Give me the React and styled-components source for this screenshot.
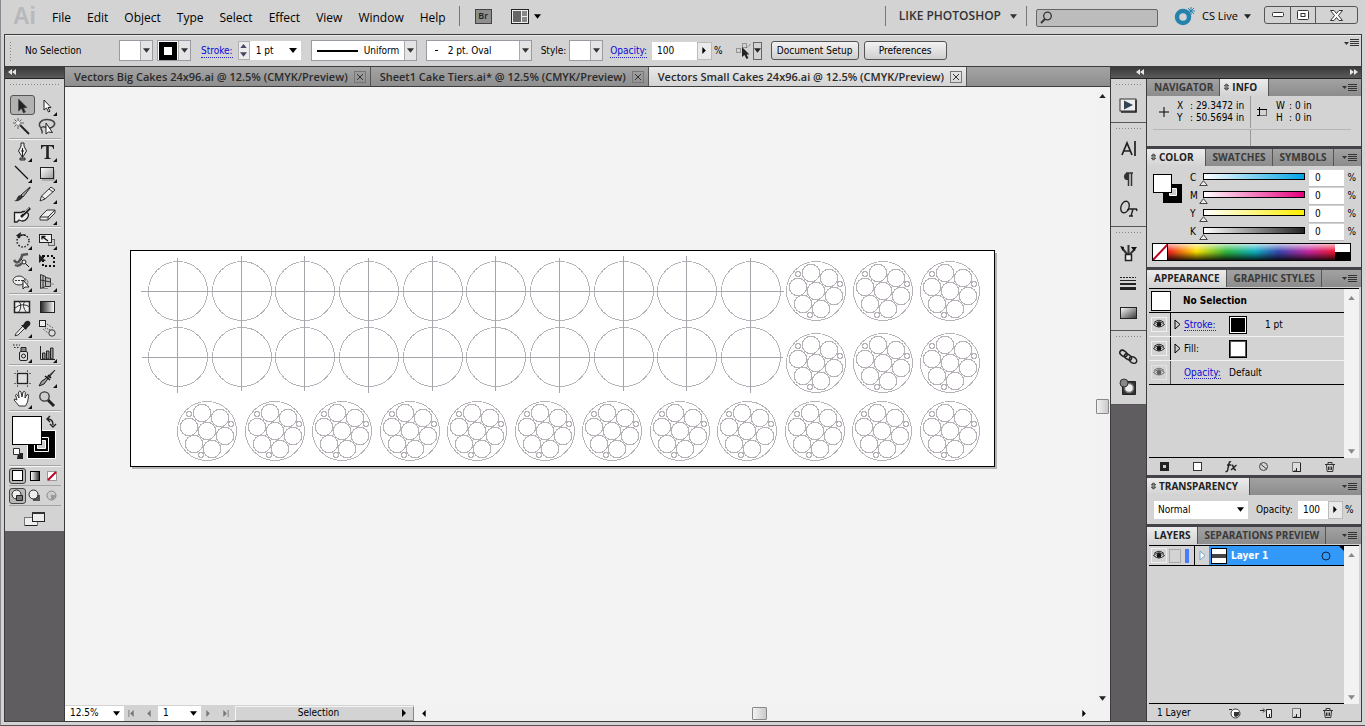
import React from 'react'
import styled, { createGlobalStyle, css } from 'styled-components'

const ui = '"DejaVu Sans Condensed", "DejaVu Sans", sans-serif'
const segoe = '"Open Sans", "Noto Sans", sans-serif'
const face = '#d3d3d3'
const dark = '#5f5d60'
const line = '#3c3c3c'
const thumb = "url(\"data:image/svg+xml,%3Csvg xmlns='http://www.w3.org/2000/svg' width='9' height='6'%3E%3Cpath d='M4.5 .7L8.3 5.5H.7z' fill='%23eee' stroke='%23444'/%3E%3C/svg%3E\")"

const GlobalStyle = createGlobalStyle`
  * {
    box-sizing: border-box;
  }

  body {
    margin: 0;
    background: ${face};
    color: #000;
    font-family: ${ui};
    font-size: 10px;
    line-height: 14px;
  }

  button, input, select {
    margin: 0;
    padding: 0;
    border: 0;
    border-radius: 0;
    background: none;
    color: inherit;
    font: inherit;
  }

  svg {
    display: block;
    flex: none;
  }
`

// Window frame
const Frame = styled.div`
  display: flex;
  flex-direction: column;
  min-height: 100vh;
  padding: 0 3px 3px;
  border-bottom: 1px solid #55525a;
  border-left: 1px solid #8c8890;
  background: ${face};
`

const Body = styled.div`
  display: flex;
  flex: 1;
  border: 1px solid ${line};
  border-top: 0;
`

// Menu bar
const MenuBar = styled.header`
  display: flex;
  align-items: center;
  height: 34px;
  padding: 0 4px 2px 9px;
  font-family: ${segoe};
  font-size: 12px;
`

const Logo = styled.span`
  width: 39px;
  color: #b8b8bc;
  font-family: "Liberation Sans", sans-serif;
  font-size: 23px;
  font-weight: bold;
  line-height: 28px;
`

const Menus = styled.nav`
  display: flex;
  gap: 16px;
  padding-top: 3px;
`

const MenuItem = styled.button`
  font-size: 12px;
`

const Divider = styled.span`
  width: 1px;
  height: 20px;
  margin: 0 ${p => p.$tight ? '9px' : '13px'};
  background: #777;
`

const BridgeButton = styled.button`
  width: 17px;
  height: 15px;
  margin: 0 19px 0 2px;
  border: 1px solid #444;
  background: #8e8e8e;
  color: #222;
  font-size: 9px;
  font-weight: 600;
  line-height: 12px;
`

const IconButton = styled.button`
  display: flex;
  align-items: center;
  gap: 5px;
`

const Spacer = styled.span`
  flex: 1;
`

const Workspace = styled.button`
  display: flex;
  align-items: center;
  gap: 9px;
  color: #333;
  font-size: 12px;
  font-weight: 600;
`

const SearchBox = styled.label`
  display: flex;
  align-items: center;
  width: 122px;
  height: 18px;
  margin: 3px 16px 0 0;
  padding: 0 3px;
  border: 1px solid #666;
  border-radius: 2px;
  background: #bcbcbc;

  input {
    width: 100%;
  }
`

const CsLive = styled.button`
  display: flex;
  align-items: center;
  gap: 6px;
  margin-right: 13px;
  font-size: 11px;
`

const WindowButtons = styled.div`
  display: flex;
  height: 18px;
  margin-bottom: 2px;
  border: 1px solid #555;
  border-radius: 3px;
`

const WindowButton = styled.button`
  display: flex;
  align-items: center;
  justify-content: center;
  width: ${p => p.$wide ? '42px' : '25px'};

  & + & {
    border-left: 1px solid #555;
  }
`

// Control bar
const ControlBar = styled.div`
  display: flex;
  align-items: center;
  height: 33px;
  padding: 0 2px 0 4px;
  border: 1px solid ${line};
  background: ${face};
  box-shadow: inset 0 1px #ececec;
`

const Grip = styled.span`
  flex: none;
  width: ${p => p.$upright ? '3px' : 'auto'};
  height: ${p => p.$upright ? '20px' : '3px'};
  background: radial-gradient(#888 1px, transparent 1px) 0 0 / 3px 3px;
`

const Status = styled.span`
  width: 94px;
  margin-left: 13px;
`

const Combo = styled.button`
  display: flex;
  width: 34px;
  height: 21px;
  margin-right: ${p => p.$gap || 4}px;
  border: 1px solid #9a9aa2;
  background: #fff;
`

const ComboFill = styled.span`
  display: flex;
  flex: 1;
  align-items: center;
  justify-content: center;
  align-self: stretch;
`

const ComboArrow = styled.span`
  display: flex;
  align-items: center;
  justify-content: center;
  align-self: stretch;
  width: 12px;
  border-left: 1px solid #aaa;
  background: #e4e4e4;
`

const LinkLabel = styled.a`
  margin-right: ${p => p.$gap || 0}px;
  border-bottom: 1px dotted #22c;
  color: #0a0ad8;
  line-height: 13px;
  text-decoration: none;
`

const Spinner = styled.span`
  display: flex;
  flex-direction: column;
  justify-content: space-around;
  align-items: center;
  width: 12px;
  height: 19px;
  border: 1px solid #b0b0b4;
  background: #ececec;
`

const SelectWrap = styled.span`
  display: grid;
  align-items: center;
  width: ${p => p.$width}px;
  height: ${p => p.$height || 19}px;
  margin-right: ${p => p.$gap || 0}px;
  border: ${p => p.$line ? '1px solid #9a9aa2' : '0'};
  background: #fff;

  > * {
    grid-area: 1 / 1;
  }

  > svg, > ${ComboArrow} {
    justify-self: end;
    pointer-events: none;
  }

  > svg {
    margin-right: 4px;
  }
`

const Select = styled.select`
  width: 100%;
  height: 100%;
  padding-left: ${p => p.$pad || 5}px;
  appearance: none;
`

const Sample = styled.span`
  width: ${p => p.$short ? '3px' : '41px'};
  height: ${p => p.$short ? '1px' : '2px'};
  margin-left: ${p => p.$short ? '8px' : '5px'};
  background: #000;
  pointer-events: none;
`

const OpacityField = styled.span`
  display: flex;
  width: ${p => p.$width}px;
  height: 18px;
  margin: 0 2px 0 5px;
  background: #fff;

  input {
    flex: 1;
    width: 0;
    padding-left: 5px;
  }

  button {
    display: flex;
    align-items: center;
    justify-content: center;
    width: 15px;
    border: 1px solid #bbb;
    background: #eaeaea;
  }
`

const PickButton = styled.button`
  display: flex;
  align-items: center;
  margin: 0 9px 0 13px;

  span {
    display: flex;
    align-items: center;
    width: 9px;
    height: 18px;
    border: 1px solid #666;
  }
`

const PushButton = styled.button`
  height: 19px;
  margin-right: 5px;
  width: ${p => p.$width}px;
  border: 1px solid #555;
  border-radius: 3px;
  background: linear-gradient(#f2f2f2, #cfcfcf);
`

const PanelMenu = styled.button`
  display: flex;
  align-items: center;
  gap: 1px;
  margin-left: auto;
  align-self: ${p => p.$top ? 'flex-start' : 'auto'};
  margin-top: ${p => p.$top ? '4px' : '0'};
`

// Tool box
const DarkHead = styled.div`
  display: flex;
  flex: none;
  align-items: center;
  height: 12px;
  padding: 0 3px 2px;
  border-bottom: 1px solid #222;
  background: linear-gradient(#3a3a3a, #5a5a5a);

  button:nth-of-type(2) {
    margin-left: auto;
  }
`

const ToolDock = styled.aside`
  flex: none;
  width: 60px;
  border-right: 1px solid ${line};
  background: ${dark};
`

const ToolPanel = styled.div`
  display: flex;
  flex-direction: column;
  padding: 4px 3px 0 4px;
  background: ${face};

  > ${Grip} {
    margin-bottom: 9px;
  }
`

const ToolGroup = styled.div`
  display: grid;
  grid-template-columns: repeat(2, 25px);
  grid-auto-rows: 21px;
  justify-content: center;
  margin-bottom: 2px;
  padding-bottom: 1px;
  border-bottom: 1px solid #a4a4a4;
  box-shadow: 0 1px #f4f4f4;
`

const Tool = styled.button`
  display: flex;
  align-items: center;
  justify-content: center;
  border: 1px solid transparent;
  border-radius: 3px;

  ${p => p.$active && css`
    height: 20px;
    border-color: #555;
    background: #b2b2b2;
  `}
`

const SwatchArea = styled.div`
  display: flex;
  justify-content: center;
  height: 53px;
  padding-top: 2px;
  border-bottom: 1px solid #a4a4a4;
  box-shadow: 0 1px #f4f4f4;
`

const ModeRow = styled.div`
  display: grid;
  grid-template-columns: repeat(3, 17px);
  align-items: center;
  height: 20px;
  border-bottom: 1px solid #a4a4a4;
`

const Mode = styled.button`
  display: flex;
  align-items: center;
  justify-content: center;
  height: 16px;
  border: 1px solid ${p => p.$active ? '#444' : 'transparent'};
  border-radius: 3px;
  background: ${p => p.$active ? '#b8b8b8' : 'none'};
`

const ScreenMode = styled.button`
  display: flex;
  align-items: center;
  justify-content: center;
  height: 25px;
`

// Document area
const Documents = styled.main`
  display: flex;
  flex: 1;
  flex-direction: column;
  min-width: 0;
`

const TabStrip = styled.div`
  display: flex;
  height: 20px;
  border-bottom: 1px solid ${line};
  background: linear-gradient(#a4a4a4, #8e8e8e);
`

const DocTab = styled.div`
  display: flex;
  align-items: center;
  gap: 6px;
  padding: 0 4px 0 9px;
  border-right: 1px solid #555;
  background: ${p => p.$active ? 'linear-gradient(#e9e9e9, #d3d3d3)' : 'none'};
  color: #2a2a2a;
  font-family: ${segoe};
  font-size: 11px;
  font-weight: 600;
  white-space: nowrap;
`

const CloseTab = styled.button`
  display: flex;
  align-items: center;
  justify-content: center;
  width: 12px;
  height: 12px;
  border: 1px solid #777;
`

const Work = styled.div`
  display: flex;
  flex: 1;
`

const Canvas = styled.section`
  flex: 1;
  min-width: 0;
  overflow: hidden;
  padding: 163px 0 0 65px;
  background: #f3f3f3;
`

const VScroll = styled.div`
  display: flex;
  flex: none;
  flex-direction: column;
  align-items: center;
  justify-content: space-between;
  width: 15px;
  padding: 7px 0 4px;
  background: #f2f2f2;
`

const ScrollThumb = styled.span`
  width: 13px;
  height: 15px;
  margin-top: 18px;
  border: 1px solid #888;
  border-radius: 1px;
  background: linear-gradient(90deg, #f2f2f2, #cacaca);
`

const WideThumb = styled(ScrollThumb)`
  width: 15px;
  height: 13px;
  margin: 0 0 0 10px;
`

const StatusBar = styled.footer`
  display: flex;
  align-items: center;
  height: 16px;
  background: ${face};
`

const NavButtons = styled.span`
  display: flex;
  align-items: center;
  justify-content: space-between;
  width: 34px;
  padding: 0 6px 0 4px;
`

const StatusButton = styled.button`
  display: flex;
  align-items: center;
  width: 179px;
  height: 15px;
  padding-right: 5px;
  border: 1px solid #888;
  border-top-color: #f4f4f4;
  border-left-color: #f4f4f4;

  span {
    flex: 1;
  }
`

const HScroll = styled.div`
  display: flex;
  flex: 1;
  align-items: center;
  justify-content: space-between;
  height: 100%;
  padding: 0 22px 0 6px;
  background: #f2f2f2;
`

// Panels on the right
const RightDock = styled.aside`
  display: flex;
  flex: none;
  flex-direction: column;
  width: 251px;
  border-left: 1px solid ${line};
`

const DockColumns = styled.div`
  display: flex;
  flex: 1;
`

const IconStrip = styled.nav`
  width: 35px;
  background: ${dark};
`

const StripGroup = styled.div`
  display: flex;
  flex-direction: column;
  padding: 4px 4px 2px;
  border-bottom: 1px solid #5c545c;
  background: ${face};

  > ${Grip} {
    margin-bottom: 4px;
  }
`

const StripButton = styled.button`
  display: flex;
  align-items: center;
  justify-content: center;
  height: 30px;
`

const Panels = styled.div`
  display: flex;
  flex: 1;
  flex-direction: column;
  border-left: 1px solid ${line};
`

const Panel = styled.section`
  display: flex;
  flex: ${p => p.$grow ? '1' : 'none'};
  flex-direction: column;
  border-bottom: ${p => p.$grow ? '0' : '3px solid #454347'};
`

const PanelTabs = styled.div`
  display: flex;
  height: 17px;
  padding-right: 4px;
  background: linear-gradient(#a2a2a2, #8c8c8c);
`

const PanelTab = styled.button`
  display: flex;
  align-items: center;
  gap: 3px;
  padding: 0 ${p => p.$mark ? '11px 1px 4px' : '6px 1px 7px'};
  border-right: 1px solid #555;
  background: ${p => p.$active ? 'linear-gradient(#ececec, #d3d3d3)' : 'none'};
  color: ${p => p.$active ? '#222' : '#3a3a3a'};
  font-family: ${segoe};
  font-size: 10px;
  font-weight: 700;
  white-space: nowrap;
`

const InfoGrid = styled.div`
  display: grid;
  grid-template-columns: 98px 1fr;
  height: 50px;
  margin: 0 10px 0 6px;
`

const InfoCell = styled.div`
  display: flex;
  align-items: center;
  gap: 8px;
  height: ${p => p.$empty ? '16px' : '32px'};
  padding-left: 6px;
  border-right: ${p => p.$split ? '1px solid #999' : '0'};
  line-height: 12px;
`

const InfoBlock = styled.div`
  border-bottom: ${p => p.$line ? '1px solid #b0b8b0' : '0'};
`

const Readout = styled.dl`
  display: grid;
  grid-template-columns: 13px auto;
  margin: 0;

  dd {
    margin: 0;
  }
`

const ColorBody = styled.div`
  display: grid;
  grid-template-columns: 37px 1fr;
  height: 101px;
  padding: 3px 5px 6px 6px;
`

const ColorRow = styled.div`
  display: grid;
  grid-template-columns: 9px 1fr 35px 12px;
  align-items: center;
  height: 18px;

  span {
    text-align: right;
  }
`

const Slider = styled.input`
  width: 100%;
  height: 13px;
  margin-top: 3px;
  appearance: none;
  background:
    linear-gradient(90deg, #fff, ${p => p.$tone}) 5px 1px / calc(100% - 10px) 5px no-repeat,
    linear-gradient(#000, #000) 4px 0 / calc(100% - 8px) 7px no-repeat;

  &::-webkit-slider-runnable-track {
    height: 13px;
  }

  &::-webkit-slider-thumb {
    width: 9px;
    height: 6px;
    margin-top: 7px;
    appearance: none;
    background: ${thumb} no-repeat;
  }
`

const ValueInput = styled.input`
  height: 17px;
  padding-left: 6px;
  border-bottom: 1px solid #bbb;
  background: #fff;
`

const Spectrum = styled.div`
  display: grid;
  grid-column: 1 / 3;
  grid-template-columns: 15px 1fr 15px;
  height: 18px;
  margin: 1px 5px 0 -1px;
  border: 1px solid #000;
`

const SpectrumRamp = styled.span`
  background:
    linear-gradient(rgba(255, 255, 255, .7), rgba(255, 255, 255, 0) 45%, rgba(0, 0, 0, .1) 55%, rgba(0, 0, 0, .8)),
    linear-gradient(90deg, #f02020, #fde000 17%, #30b840 35%, #10b0c0 52%, #3848b0 66%, #c428a0 84%, #f01830);
`

const BlackWhite = styled.span`
  background: linear-gradient(#fff 50%, #000 0);
`

const ListBody = styled.div`
  display: flex;
  flex: ${p => p.$height ? `0 0 ${p.$height}px` : '1'};
  margin: 1px 2px 0;
  border-top: 1px solid #000;
`

const List = styled.div`
  flex: 1;
  border-bottom: 1px solid #000;
`

const AppearanceHead = styled.div`
  display: flex;
  align-items: center;
  gap: 12px;
  height: 24px;
  padding-left: 2px;
  border-bottom: 1px solid #000;
  font-weight: bold;
`

const AppearanceRow = styled.div`
  display: grid;
  grid-template-columns: 22px 13px 45px 36px auto;
  align-items: center;
  height: 24px;
  border-bottom: 1px solid ${p => p.$last ? '#000' : '#f2f2f2'};

  > svg {
    justify-self: center;
  }
`

const EyeCell = styled.button`
  display: flex;
  align-items: center;
  justify-content: center;
  height: 100%;
  padding-right: 1px;
  border-right: ${p => p.$plain ? '0' : '1px solid #000'};
  opacity: ${p => p.$dim ? 0.6 : 1};

  svg {
    outline: 1px solid #efefef;
    outline-offset: 1px;
  }
`

const Chip = styled.span`
  width: ${p => p.$size}px;
  height: ${p => p.$size}px;
  border: 1px solid #000;
  background: ${p => p.$fill};
  box-shadow: inset 0 0 0 1px ${p => p.$ring || '#fff'};
`

const PanelFoot = styled.div`
  display: grid;
  grid-template-columns: ${p => p.$label ? '1fr repeat(4, 31px)' : 'repeat(6, 33px)'};
  align-items: center;
  justify-content: start;
  height: 17px;
  padding-left: ${p => p.$label ? '10px' : '1px'};
  padding-right: ${p => p.$label ? '18px' : '0'};

  button {
    display: flex;
    justify-content: center;
  }
`

const BlendRow = styled.div`
  display: flex;
  align-items: center;
  height: 29px;
  padding: 0 4px 0 7px;
`

const LayerRow = styled.div`
  display: grid;
  grid-template-columns: 20px 14px 11px 17px 1fr 12px 11px;
  height: 20px;
  align-items: center;
  border-bottom: 1px solid #000;
  background: linear-gradient(#3399f8, #3399f8) 60px 0 no-repeat;
`

const LayerName = styled.span`
  display: flex;
  align-items: center;
  gap: 4px;
  color: #fff;
  font-weight: bold;
`

const LockBox = styled.span`
  width: 12px;
  height: 14px;
  border: 1px solid #aaa;
`

const LayerColor = styled.span`
  width: 4px;
  height: 14px;
  margin-left: 2px;
  background: #4a7bff;
`

const Twirl = styled.span`
  display: flex;
  align-items: center;
  height: 100%;
  padding-left: 4px;
  border-left: 1px solid #000;
`

const Corner = styled.span`
  align-self: start;
  justify-self: end;
  width: 5px;
  height: 5px;
  background: #000;
  clip-path: polygon(0 0, 100% 0, 100% 100%);
`

// Small marks
const Down = ({ size = 7, color = '#000' }) => (
  <svg width={size} height='5' viewBox='0 0 8 5'><path d='M0 0h8L4 5z' fill={color} /></svg>
)

const Up = ({ color = '#222' }) => (
  <svg width='7' height='4' viewBox='0 0 8 5'><path d='M0 5h8L4 0z' fill={color} /></svg>
)

const Side = ({ left, bar, color = '#000', h = 7 }) => (
  <svg width='7' height={h} viewBox='0 0 7 8'>
    <g fill={color} transform={left ? 'matrix(-1 0 0 1 7 0)' : undefined}>
      <path d='M1 0v8l4-4z' />
      {bar && <path d='M6 0h1v8H6z' />}
    </g>
  </svg>
)

const Chevrons = ({ left }) => (
  <svg width='8' height='6' viewBox='0 0 8 6'>
    <path d={left ? 'M4 0v6L0 3zM8 0v6L4 3z' : 'M0 0v6l4-3zM4 0v6l4-3z'} fill='#e6e6e6' />
  </svg>
)

const Cycle = () => (
  <svg width='5' height='8' viewBox='0 0 5 8'>
    <path d='M.5 3L2.500 .8 4.500 3zM.5 5l2 2.200L4.500 5z' fill='none' stroke='#222' />
  </svg>
)

const MenuLines = () => (
  <>
    <Down size={5} color='#333' />
    <svg width='9' height='8' viewBox='0 0 9 8'><path d='M0 .5h9M0 2.500h9M0 4.500h9M0 6.500h9' stroke='#333' /></svg>
  </>
)

const Eye = () => (
  <svg width='12' height='11' viewBox='0 0 12 11'>
    <path d='M.5 5.500Q6 0 11.500 5.500 6 10.500 .5 5.500z' fill='#ddd' stroke='#222' />
    <circle cx='6' cy='5.300' r='2.400' fill='#111' />
    <path d='M1 3.500Q6-1 11 3.500' fill='none' stroke='#333' />
  </svg>
)

// Tool drawings, each on a 20 by 20 grid
const tools = {
  selection: <path d='M6.500 4v12l3-2.500 2 4.500 2-1-2-4 3.500-.5z' fill='#222' stroke='#444' strokeWidth='.6' />,
  direct: <path d='M7 4v10l2.500-2 2 4 1.500-.8-2-3.700h3z' fill='#fff' stroke='#222' />,
  wand: <><path d='M8 8l9 9' stroke='#222' strokeWidth='2' /><path d='M6 1v11M1 6h11M2.500 2.500l7 7M9.500 2.500l-7 7' stroke='#444' strokeWidth='.8' /><circle cx='6' cy='6' r='2' fill='#eee' /></>,
  lasso: <><path d='M4 11C0 7 4 2.500 10 2.500s9 3 7 6-6 3-8 2-5-1-5 1 2 1 1 5' fill='none' stroke='#444' strokeWidth='1.500' /><path d='M9 6v11l2.500-2 4 .5z' fill='#fff' stroke='#222' /></>,
  pen: <><path d='M9 1h3v3l2.500 5-4 6.500L6.500 9 9 4z' fill='#eee' stroke='#222' /><path d='M10.500 6v9M8 18h5v-2H8z' stroke='#222' fill='#999' /><circle cx='10.500' cy='9' r='1.200' fill='#222' /></>,
  type: <path d='M4 3h13v4h-.8q-.3-2.800-2.700-2.800h-1.700V15q0 1.400 2 1.400v.6H7.200v-.6q2 0 2-1.400V4.200H7.500Q5.100 4.200 4.800 7H4z' fill='#222' />,
  segment: <path d='M3 3l13 13' stroke='#111' strokeWidth='1.300' />,
  rect: <><path d='M5 17h12V7' stroke='#888' fill='none' /><rect x='3.500' y='4.500' width='13' height='11' fill='url(#soft)' stroke='#222' /></>,
  brush: <><path d='M18 3l-9 8 2 2 7-9z' fill='#aaa' stroke='#222' /><path d='M9 11l2 2q-3 5-9 4 3-1 3.500-4 1-2 3.500-2z' fill='#333' /></>,
  pencil: <path d='M3 17l1.500-5L14 3l4 3-10 9zM4.500 12l3.500 3M12 5l4 3' fill='#eee' stroke='#333' />,
  blob: <><path d='M2.500 7.500H9q3-2 6 0t0 6-8 1.500l-2 2H2.500z' fill='#eee' stroke='#222' strokeWidth='1.300' /><path d='M18 3l-9 9' stroke='#222' strokeWidth='2.500' /><path d='M17 3l-6 6' stroke='#aaa' /></>,
  eraser: <path d='M3 12l7-7h8l-7 7zM3 12v3h8v-3M11 15l7-7V5' fill='#eee' stroke='#333' />,
  rotate: <><circle cx='11' cy='11' r='6' stroke='#222' strokeWidth='1.500' strokeDasharray='1.500 1.640' /><path d='M6 8a6 6 0 0 1 8-2.500' stroke='#222' strokeWidth='1.400' /><path d='M9 2L4 5.500l4 3z' fill='#222' /></>,
  scale: <><rect x='11.500' y='9.500' width='6' height='6' fill='#ccc' stroke='#666' /><rect x='2.500' y='4.500' width='12' height='8' fill='#eee' stroke='#222' /><path d='M5 6.500l6 4.500M5 9.500v-3h3.500' stroke='#111' fill='none' strokeWidth='1.300' /></>,
  warp: <><path d='M2 9q3 5 6 0t2-5 6-1M3 14q4 2 7-2' fill='none' stroke='#555' strokeWidth='2.500' /><path d='M9 8l8 8' stroke='#111' /><circle cx='12' cy='11' r='2' fill='#eee' stroke='#222' /></>,
  transform: <><rect x='6' y='5' width='11' height='10' fill='none' stroke='#111' strokeWidth='2' strokeDasharray='2 2' /><path d='M2 3v9l2.500-2H9z' fill='#222' /></>,
  shaper: <><path d='M10 14a4 4 0 1 0 0-7' fill='none' stroke='#777' /><ellipse cx='7' cy='8.500' rx='6' ry='4.500' fill='#eee' stroke='#333' /><path d='M3 8.500h9' stroke='#333' strokeDasharray='2 1' /><path d='M11 8v9l2-2h4z' fill='#fff' stroke='#222' /></>,
  perspective: <><path d='M3.500 2.500l5 2v10l-5 2zM8.500 5.500l5 1v8h-5M3.500 8l10 2M6 3v13' fill='#bbb' stroke='#333' /><path d='M11 16.500H5M13 12h4' stroke='#888' /></>,
  mesh: <><rect x='2.500' y='4.500' width='15' height='11' fill='#eee' stroke='#222' strokeWidth='1.500' /><path d='M7 4q4 6-1 12M13 4q-4 5 2 12M3 11q7-6 15-1' fill='none' stroke='#333' /></>,
  gradient: <rect x='3.500' y='4.500' width='14' height='11' fill='url(#ramp)' stroke='#222' />,
  dropper: <><path d='M4 15.500L11 8l2 2-7 7-3 .8z' fill='#eee' stroke='#333' /><path d='M9 7l5 5 1-2 3-3q1-3-1-4t-4 1l-2 3z' fill='#222' /></>,
  blend: <><rect x='2.500' y='2.500' width='6' height='6' fill='#eee' stroke='#222' /><circle cx='15' cy='15' r='3.200' fill='#ddd' stroke='#333' /><path d='M6 11l5 4M10 6l6 4M8 10l6 2' stroke='#444' strokeDasharray='1 1' /></>,
  spray: <><rect x='7.500' y='8.500' width='8' height='9' rx='1.500' fill='#ddd' stroke='#222' /><path d='M9 8V4.500h5V8' fill='#888' stroke='#222' /><circle cx='11.500' cy='13' r='2' fill='none' stroke='#222' /><path d='M1 2h7M2 4.500h6' stroke='#222' strokeDasharray='1.500 1.500' /></>,
  graph: <><path d='M3.500 3v13.500H18' fill='none' stroke='#222' /><path d='M5.500 16V10h2.500v6zM9.500 16V8h2.500v8zM13.500 16V5H16v11z' fill='#999' stroke='#222' /></>,
  artboard: <><rect x='5.500' y='5.500' width='10' height='10' fill='#ddd' stroke='#222' strokeWidth='1.300' /><path d='M2 5.500h2M17 5.500h2M2 15.500h2M17 15.500h2M5.500 2v2M15.500 2v2M5.500 17v2M15.500 17v2' stroke='#666' /></>,
  slice: <><path d='M18 2L8 11q-4 1-6 7 6-1 8-6z' fill='#999' stroke='#222' /><path d='M8 8l5 4M11 7l3 3' stroke='#111' strokeWidth='1.500' /></>,
  hand: <path d='M7 17q-3-4-5-6 0-2 3 0L3.500 6q1-2 2.500 1l1 2-.500-6q1.500-2 2.500 0L10 8l1-5q2-1.500 2.300.5L13 9l2-3.500q2-.5 1.500 2Q16 14 13.500 17z' fill='#fff' stroke='#333' />,
  zoom: <><path d='M11 11l6 6' stroke='#222' strokeWidth='3' /><circle cx='7.500' cy='7.500' r='4.700' fill='#ccc' stroke='#333' strokeWidth='1.300' /></>
}

const toolGroups = [
  ['selection', 'direct+', 'wand', 'lasso'],
  ['pen+', 'type+', 'segment+', 'rect+', 'brush', 'pencil+', 'blob', 'eraser+'],
  ['rotate+', 'scale+', 'warp+', 'transform', 'shaper+', 'perspective+'],
  ['mesh', 'gradient', 'dropper+', 'blend'],
  ['spray+', 'graph+'],
  ['artboard', 'slice+', 'hand+', 'zoom']
]

const ToolIcon = ({ name, more }) => (
  <svg width='21' height='20' viewBox='0 0 21 20' fill='none'>
    <defs>
      <linearGradient id='soft' x1='0' y1='0' x2='1' y2='1'><stop stopColor='#fff' /><stop offset='1' stopColor='#999' /></linearGradient>
      <linearGradient id='ramp'><stop stopColor='#222' /><stop offset='1' stopColor='#fff' /></linearGradient>
    </defs>
    {tools[name]}
    {more && <path d='M20 16v4h-4z' fill='#111' />}
  </svg>
)

const stripGroups = [
  {
    actions: <><rect x='1' y='4' width='16' height='12' fill='#eee' stroke='#333' /><path d='M17 5v12H2' stroke='#222' strokeWidth='1.500' /><path d='M5 5.500v9l9-4.500z' fill='#345' /></>
  },
  {
    character: <path d='M3 16L8 4l5 12M5 12h6.500M16 2v15' stroke='#222' strokeWidth='1.700' />,
    paragraph: <><path d='M9 4H7a4 4 0 0 0 0 7h2z' fill='#333' /><path d='M9.500 4v13M12.500 4v13M7 4h7' stroke='#333' strokeWidth='1.500' /></>,
    openType: <><ellipse cx='6' cy='8' rx='4' ry='6' transform='rotate(20 6 8)' stroke='#222' strokeWidth='1.400' /><path d='M9 10h9M14 10l-2 7M10 17h4M9 10l-.5 2M18 10l-.5 2' stroke='#222' strokeWidth='1.400' /></>
  },
  {
    brushes: <><rect x='6.500' y='11.500' width='6' height='6' fill='#eee' stroke='#222' strokeWidth='1.500' /><path d='M8 11L3 5M9.500 11V2M11 11l5-5' stroke='#333' strokeWidth='2' /><path d='M1 3l4 1-1 4zM12 4h6l-3 4z' fill='#111' /></>,
    stroke: <><path d='M1 4.500h16' stroke='#222' strokeDasharray='2 1' /><path d='M1 7.500h16' stroke='#222' /><path d='M1 11h16' stroke='#222' strokeWidth='2' /><path d='M1 15.500h16' stroke='#222' strokeWidth='3' /></>,
    gradient: <rect x='1.500' y='4.500' width='16' height='11' fill='url(#soft2)' stroke='#222' />
  },
  {
    links: <><ellipse cx='4.500' cy='6.500' rx='4' ry='2.700' transform='rotate(35 4.500 6.500)' stroke='#222' strokeWidth='1.500' /><ellipse cx='9' cy='10' rx='4' ry='2.300' transform='rotate(35 9 10)' stroke='#222' strokeWidth='1.500' /><ellipse cx='14' cy='13' rx='4' ry='3' transform='rotate(35 14 13)' stroke='#222' strokeWidth='1.500' /></>,
    transparency: <><path d='M3.500 4.500h13v13h-13z' fill='#333' stroke='#222' /><circle cx='10' cy='11' r='4.500' fill='#eee' stroke='#777' strokeWidth='1.500' /><circle cx='5' cy='6' r='4' fill='#888' stroke='#333' /></>
  }
]

const footIcons = {
  newStroke: <rect x='2.500' y='2.500' width='6' height='6' fill='#ccc' stroke='#222' strokeWidth='3' />,
  newFill: <rect x='1.500' y='1.500' width='8' height='8' fill='#fff' stroke='#333' />,
  effect: <path d='M6 1Q4.500 0 4 2.500L2.700 9Q2.200 11 .5 10.500M2 4h4M6.500 4q1.500 0 2 2.500T11 9M11.500 4L6 9' stroke='#222' strokeWidth='1.400' />,
  clear: <><circle cx='5.500' cy='5.500' r='4' stroke='#444' /><path d='M2.500 3l6 5' stroke='#444' /></>,
  copy: <><path d='M1.500 1.500h8v9h-8z' fill='#ddd' stroke='#777' /><path d='M9.500 2v8.500H2M5.500 7v3H3' stroke='#222' /></>,
  trash: <><path d='M2.500 4l.7 6.500h5.600L9.500 4M1 3.500h10M4 3V1.500h4V3M4.500 5.500v3.500M6 5.500v3.500M7.500 5.500v3.500' stroke='#333' /></>,
  mask: <><circle cx='6.500' cy='6.500' r='4.500' fill='#fff' stroke='#333' /><path d='M5 5h5q1 4-3 5l-2-1z' fill='#333' /><path d='M0 2.500h3' stroke='#222' /></>,
  sublayer: <><path d='M6.500 2.500h5v8h-5z' fill='#eee' stroke='#222' /><path d='M0 3.500h4M3 1.500l2 2-2 2M9.500 7v3' stroke='#222' /></>
}

const FootIcon = ({ name }) => (
  <button aria-label={name}>
    <svg width='12' height='12' viewBox='0 0 12 12' fill='none'>{footIcons[name]}</svg>
  </button>
)

// Artboard drawing
const range = n => Array.from({ length: n }, (_, i) => i)
const columns = range(10).map(i => 48 + Math.round(i * 63.67))
const cakes = [
  ...range(12).map(i => [77 + Math.round(i * 67.5), 181]),
  ...[686, 753, 820].flatMap(x => [[x, 41], [x, 113]])
]
const rounds = [[0, 0], [-5, -18], [13, -13], [18, 5], [5, 18], [-13, 13], [-18, -4]]
const dots = [[-18, -17], [24, -7], [-6, 24]]

const Artboard = () => (
  <svg width='868' height='220' viewBox='0 0 868 220' fill='none'>
    <path d='M2 218h865M866 3v216' stroke='#b4b4b4' strokeWidth='2' />
    <rect x='.5' y='.5' width='864' height='216' fill='#fff' stroke='#000' />
    <g stroke='#b7b2b8' shapeRendering='crispEdges'>
      {columns.map((x, i) => (
        <g key={x}>
          <circle cx={x} cy='41' r='29.500' />
          <circle cx={x} cy='107' r='29.500' />
          <path d={`M${x - 0.5} ${i % 3 ? 6 : 8}v135`} stroke='#a9a3ab' />
        </g>
      ))}
      <path d='M11 41.500h643M12 107.500h641' stroke='#a9a3ab' />
      {cakes.map(([x, y]) => (
        <g key={`${x}-${y}`} transform={`translate(${x} ${y})`}>
          <circle r='29.500' />
          {rounds.map(([cx, cy]) => <circle key={cx} cx={cx} cy={cy} r='8.700' />)}
          {dots.map(([cx, cy]) => <circle key={cx} cx={cx} cy={cy} r='2.400' />)}
        </g>
      ))}
    </g>
  </svg>
)

const menus = ['File', 'Edit', 'Object', 'Type', 'Select', 'Effect', 'View', 'Window', 'Help']

const docs = [
  'Vectors Big Cakes 24x96.ai @ 12.5% (CMYK/Preview)',
  'Sheet1 Cake Tiers.ai* @ 12.5% (CMYK/Preview)',
  'Vectors Small Cakes 24x96.ai @ 12.5% (CMYK/Preview)'
]

const inks = [['C', '#00a4e4'], ['M', '#e6007e'], ['Y', '#ffee00'], ['K', '#222']]

const Tabs = ({ names, active, mark }) => (
  <PanelTabs>
    {names.map((name, i) => (
      <PanelTab key={name} $active={i === active} $mark={mark && i === active}>
        {mark && i === active && <Cycle />}
        {name}
      </PanelTab>
    ))}
    <PanelMenu aria-label='Panel menu'><MenuLines /></PanelMenu>
  </PanelTabs>
)

const Scroller = () => (
  <VScroll>
    <Up color='#888' />
    <Down color='#888' />
  </VScroll>
)

const Header = () => (
  <MenuBar>
    <Logo>Ai</Logo>
    <Menus>
      {menus.map(name => <MenuItem key={name}>{name}</MenuItem>)}
    </Menus>
    <Divider />
    <BridgeButton>Br</BridgeButton>
    <IconButton aria-label='Arrange documents'>
      <svg width='18' height='15' viewBox='0 0 18 15'>
        <rect x='.5' y='.5' width='17' height='14' fill='#eee' stroke='#222' />
        <path d='M2 2h8v11H2z' fill='#666' /><path d='M11 2h5v5h-5zM11 8h5v5h-5z' fill='#888' />
      </svg>
      <Down />
    </IconButton>
    <Spacer />
    <Divider />
    <Workspace>LIKE PHOTOSHOP <Down color='#333' /></Workspace>
    <Divider $tight />
    <SearchBox aria-label='Search'>
      <svg width='13' height='13' viewBox='0 0 13 13' fill='none' stroke='#333'>
        <circle cx='7.500' cy='5' r='3.800' strokeWidth='1.300' /><path d='M5 8l-4 4' strokeWidth='1.800' />
      </svg>
      <input type='text' />
    </SearchBox>
    <CsLive>
      <svg width='22' height='20' viewBox='0 0 22 20' fill='none' stroke='#2482ad'>
        <circle cx='9' cy='11' r='6' strokeWidth='4.500' />
        <path d='M17 1v8M13 5h8M14 2l6 6M20 2l-6 6' />
      </svg>
      CS Live <Down color='#222' />
    </CsLive>
    <WindowButtons>
      <WindowButton aria-label='Minimize'>
        <svg width='12' height='6'><rect x='.5' y='.5' width='11' height='4' rx='1' fill='#fff' stroke='#333' /></svg>
      </WindowButton>
      <WindowButton aria-label='Maximize'>
        <svg width='12' height='11' fill='#fff' stroke='#333'><rect x='.5' y='.5' width='11' height='9' rx='1' /><rect x='4' y='3.500' width='4' height='3' /></svg>
      </WindowButton>
      <WindowButton $wide aria-label='Close'>
        <svg width='13' height='11' viewBox='0 0 13 11'>
          <path d='M.5 .5h3.500l2.500 3L9 .5h3.500L8.500 5.500l4 5H9l-2.500-3-2.500 3H.5l4-5z' fill='#fff' stroke='#333' />
        </svg>
      </WindowButton>
    </WindowButtons>
  </MenuBar>
)

const Controls = () => (
  <ControlBar>
    <Grip $upright />
    <Status>No Selection</Status>
    <Combo aria-label='Fill'>
      <ComboFill />
      <ComboArrow><Down color='#333' /></ComboArrow>
    </Combo>
    <Combo $gap={10} aria-label='Stroke color'>
      <ComboFill>
        <svg width='18' height='18'><path d='M0 0h18v18H0z' /><path d='M5 5h8v8H5z' fill='#fff' /></svg>
      </ComboFill>
      <ComboArrow><Down color='#333' /></ComboArrow>
    </Combo>
    <LinkLabel href='#stroke' $gap={5}>Stroke:</LinkLabel>
    <Spinner><Up color='#446' /><Down color='#446' /></Spinner>
    <SelectWrap $width={51} $gap={10}>
      <Select $pad={6} aria-label='Stroke weight'><option>1 pt</option></Select>
      <Down size={8} />
    </SelectWrap>
    <SelectWrap $width={106} $height={21} $line $gap={9}>
      <Select $pad={52} aria-label='Width profile'><option>Uniform</option></Select>
      <Sample />
      <ComboArrow><Down color='#333' /></ComboArrow>
    </SelectWrap>
    <SelectWrap $width={106} $height={21} $line $gap={9}>
      <Select $pad={21} aria-label='Brush'><option>2 pt. Oval</option></Select>
      <Sample $short />
      <ComboArrow><Down color='#333' /></ComboArrow>
    </SelectWrap>
    <span>Style:&nbsp;</span>
    <Combo $gap={7} aria-label='Style'>
      <ComboFill />
      <ComboArrow><Down color='#333' /></ComboArrow>
    </Combo>
    <LinkLabel href='#opacity'>Opacity:</LinkLabel>
    <OpacityField $width={60}>
      <input type='text' defaultValue='100' aria-label='Opacity' />
      <button aria-label='Opacity slider'><Side /></button>
    </OpacityField>
    %
    <PickButton aria-label='Select similar'>
      <svg width='17' height='18' viewBox='0 0 17 18' fill='none'>
        <path d='M.5 6.500h4v4h-4zM6.500 1.500h4v4h-4z' stroke='#555' strokeDasharray='1 1' />
        <path d='M6 5v10l2.500-2 2 4 2-1-2-3.500h3z' fill='#222' /><path d='M10 6l5-4' stroke='#555' strokeDasharray='1 1' />
      </svg>
      <span><Down color='#222' /></span>
    </PickButton>
    <PushButton $width={88}>Document Setup</PushButton>
    <PushButton $width={83}>Preferences</PushButton>
    <PanelMenu $top aria-label='Panel menu'><MenuLines /></PanelMenu>
  </ControlBar>
)

const Toolbox = () => (
  <ToolDock>
    <DarkHead><button aria-label='Collapse tools'><Chevrons left /></button></DarkHead>
    <ToolPanel>
      <Grip />
      {toolGroups.map(group => (
        <ToolGroup key={group[0]}>
          {group.map(item => {
            const name = item.replace('+', '')
            return (
              <Tool key={name} $active={name === 'selection'} aria-label={name}>
                <ToolIcon name={name} more={item !== name} />
              </Tool>
            )
          })}
        </ToolGroup>
      ))}
      <SwatchArea>
        <svg width='46' height='48' viewBox='0 0 46 48'>
          <path d='M15.500 15.500h28v28h-28z' fill='#000' stroke='#fff' />
          <path d='M22.500 22.500h14v14h-14z' fill='#000' stroke='#fff' />
          <path d='M25.500 25.500h8v8h-8z' fill='#ccc' stroke='#fff' />
          <rect x='.5' y='1.500' width='29' height='28' fill='#fff' stroke='#000' />
          <path d='M36 4q5 0 5 6M38 1l-3 3 3 3M38 9l3 3 3-3' fill='none' stroke='#222' strokeWidth='1.400' />
          <path d='M6 38h5v6H5z' fill='#222' /><path d='M1.500 33.500h6v6h-6z' fill='#fff' stroke='#333' />
        </svg>
      </SwatchArea>
      <ModeRow>
        <Mode $active aria-label='Color'><Chip $size={11} $fill='#fff' /></Mode>
        <Mode aria-label='Gradient'><Chip $size={10} $fill='linear-gradient(90deg, #fff, #333)' $ring='transparent' /></Mode>
        <Mode aria-label='None'>
          <svg width='10' height='10'><rect x='.5' y='.5' width='9' height='9' fill='#fff' stroke='#999' /><path d='M1 9l8-8' stroke='#c00020' strokeWidth='2' /></svg>
        </Mode>
      </ModeRow>
      <ModeRow>
        <Mode $active aria-label='Draw normal'>
          <svg width='13' height='13'><circle cx='5.500' cy='5.500' r='4.500' fill='#eee' stroke='#222' /><path d='M5.500 6.500h6v5h-6z' fill='#777' stroke='#222' /></svg>
        </Mode>
        <Mode aria-label='Draw behind'>
          <svg width='13' height='13'><path d='M5 6h7v6H5z' fill='#555' /><circle cx='5.500' cy='5.500' r='4.500' fill='#eee' stroke='#222' /></svg>
        </Mode>
        <Mode aria-label='Draw inside'>
          <svg width='11' height='11'><circle cx='5.500' cy='5.500' r='4.500' fill='#ccc' stroke='#888' /><path d='M5 5h5q-1 4-5 5z' fill='#999' /></svg>
        </Mode>
      </ModeRow>
      <ScreenMode aria-label='Screen mode'>
        <svg width='22' height='16'><rect x='.5' y='6.500' width='13' height='8' fill='#eee' stroke='#777' /><path d='M13 14.500H1' stroke='#222' /><rect x='8.500' y='1.500' width='12' height='9' fill='#eee' stroke='#222' /><path d='M8 2h13' stroke='#333' strokeWidth='2' /></svg>
      </ScreenMode>
    </ToolPanel>
  </ToolDock>
)

const InfoPanel = () => (
  <Panel>
    <Tabs names={['NAVIGATOR', 'INFO']} active={1} mark />
    <InfoGrid>
      <InfoBlock $line>
        <InfoCell $split>
          <svg width='10' height='10'><path d='M5 0v10M0 5h10' stroke='#000' /></svg>
          <Readout><dt>X</dt><dd>: 29.3472 in</dd><dt>Y</dt><dd>: 50.5694 in</dd></Readout>
        </InfoCell>
      </InfoBlock>
      <InfoBlock $line>
        <InfoCell>
          <svg width='11' height='11' fill='none' stroke='#000'><path d='M2.500 0v8.500H0M0 2.500h10' /><path d='M2.500 8.500h7v-6' strokeDasharray='1 1' /></svg>
          <Readout><dt>W</dt><dd>: 0 in</dd><dt>H</dt><dd>: 0 in</dd></Readout>
        </InfoCell>
      </InfoBlock>
      <InfoBlock><InfoCell $split $empty /></InfoBlock>
    </InfoGrid>
  </Panel>
)

const ColorPanel = () => (
  <Panel>
    <Tabs names={['COLOR', 'SWATCHES', 'SYMBOLS']} active={0} mark />
    <ColorBody>
      <svg width='30' height='36'>
        <path d='M10 15h19v19H10z' /><path d='M16.500 19.500h7v7h-7z' fill='#ccc' stroke='#fff' />
        <rect x='.5' y='5.500' width='18' height='18' fill='#fff' stroke='#000' />
      </svg>
      <div>
        {inks.map(([ink, tone]) => (
          <ColorRow key={ink}>
            {ink}
            <Slider type='range' min='0' max='100' defaultValue='0' $tone={tone} aria-label={`${ink} level`} />
            <ValueInput type='text' defaultValue='0' aria-label={`${ink} value`} />
            <span>%</span>
          </ColorRow>
        ))}
      </div>
      <Spectrum>
        <svg width='15' height='16'><path d='M0 0h15v16H0z' fill='#fff' /><path d='M0 16L15 0' stroke='#c00020' strokeWidth='2' /><path d='M14.500 0v16' stroke='#000' /></svg>
        <SpectrumRamp />
        <BlackWhite />
      </Spectrum>
    </ColorBody>
  </Panel>
)

const Triangle = ({ light }) => (
  <svg width='7' height='11' viewBox='0 0 7 11'>
    <path d='M1 1v9l5-4.500z' fill={light ? '#fff' : '#ccc'} stroke={light ? '#6fa8cc' : '#000'} />
  </svg>
)

const AppearancePanel = () => (
  <Panel>
    <Tabs names={['APPEARANCE', 'GRAPHIC STYLES']} active={0} />
    <ListBody $height={170}>
      <List>
        <AppearanceHead><Chip $size={20} $fill='#fff' />No Selection</AppearanceHead>
        <AppearanceRow>
          <EyeCell aria-label='Toggle stroke'><Eye /></EyeCell>
          <Triangle />
          <span><LinkLabel href='#stroke'>Stroke:</LinkLabel></span>
          <Chip $size={18} $fill='#000' />
          1 pt
        </AppearanceRow>
        <AppearanceRow>
          <EyeCell aria-label='Toggle fill'><Eye /></EyeCell>
          <Triangle />
          <span>Fill:</span>
          <Chip $size={18} $fill='#fff' $ring='#555' />
        </AppearanceRow>
        <AppearanceRow $last>
          <EyeCell $dim aria-label='Toggle opacity'><Eye /></EyeCell>
          <span />
          <span><LinkLabel href='#opacity'>Opacity:</LinkLabel></span>
          Default
        </AppearanceRow>
      </List>
      <Scroller />
    </ListBody>
    <PanelFoot>
      {['newStroke', 'newFill', 'effect', 'clear', 'copy', 'trash'].map(n => <FootIcon key={n} name={n} />)}
    </PanelFoot>
  </Panel>
)

const TransparencyPanel = () => (
  <Panel>
    <Tabs names={['TRANSPARENCY']} active={0} mark />
    <BlendRow>
      <SelectWrap $width={94} $height={18} $gap={8}>
        <Select $pad={4} aria-label='Blend mode'><option>Normal</option></Select>
        <Down />
      </SelectWrap>
      Opacity:
      <OpacityField $width={45}>
        <input type='text' defaultValue='100' aria-label='Layer opacity' />
        <button aria-label='Layer opacity slider'><Side /></button>
      </OpacityField>
      %
    </BlendRow>
  </Panel>
)

const LayersPanel = () => (
  <Panel $grow>
    <Tabs names={['LAYERS', 'SEPARATIONS PREVIEW']} active={0} />
    <ListBody>
      <List>
        <LayerRow>
          <EyeCell $plain aria-label='Toggle layer'><Eye /></EyeCell>
          <LockBox />
          <LayerColor />
          <Twirl><Triangle light /></Twirl>
          <LayerName>
            <svg width='16' height='16'><rect x='.5' y='.5' width='15' height='15' fill='#fff' stroke='#000' /><path d='M1 8h14' stroke='#444' strokeWidth='4' /></svg>
            Layer 1
          </LayerName>
          <svg width='10' height='10'><circle cx='5' cy='5' r='4' fill='none' stroke='#124' /></svg>
          <Corner />
        </LayerRow>
      </List>
      <Scroller />
    </ListBody>
    <PanelFoot $label>
      1 Layer
      {['mask', 'sublayer', 'copy', 'trash'].map(n => <FootIcon key={n} name={n} />)}
    </PanelFoot>
  </Panel>
)

const App = () => (
  <>
    <GlobalStyle />
    <Frame>
      <Header />
      <Controls />
      <Body>
        <Toolbox />
        <Documents>
          <TabStrip>
            {docs.map((name, i) => (
              <DocTab key={name} $active={i === 2}>
                {name}
                <CloseTab aria-label='Close document'>
                  <svg width='8' height='8'><path d='M1 1l6 6M7 1L1 7' stroke='#333' /></svg>
                </CloseTab>
              </DocTab>
            ))}
          </TabStrip>
          <Work>
            <Canvas><Artboard /></Canvas>
            <VScroll><Up /><ScrollThumb /><Down color='#222' /></VScroll>
          </Work>
          <StatusBar>
            <SelectWrap $width={59} $height={15}>
              <Select aria-label='Zoom'><option>12.5%</option></Select>
              <Down />
            </SelectWrap>
            <NavButtons><Side left bar color='#777' /><Side left color='#777' /></NavButtons>
            <SelectWrap $width={43} $height={15}>
              <Select aria-label='Artboard'><option>1</option></Select>
              <Down />
            </SelectWrap>
            <NavButtons><Side color='#777' /><Side bar color='#777' /></NavButtons>
            <StatusButton><span>Selection</span><Side h={10} /></StatusButton>
            <HScroll><Side left /><WideThumb /><Side /></HScroll>
          </StatusBar>
        </Documents>
        <RightDock>
          <DarkHead>
            <svg width='22' height='6' />
            <button aria-label='Expand icons'><Chevrons left /></button>
            <button aria-label='Collapse panels'><Chevrons /></button>
          </DarkHead>
          <DockColumns>
            <IconStrip>
              {stripGroups.map((group, i) => (
                <StripGroup key={i}>
                  <Grip />
                  {Object.keys(group).map(name => (
                    <StripButton key={name} aria-label={name}>
                      <svg width='19' height='20' viewBox='0 0 19 20' fill='none'>
                        <defs><linearGradient id='soft2' x1='0' y1='0' x2='1' y2='1'><stop stopColor='#fff' /><stop offset='1' stopColor='#333' /></linearGradient></defs>
                        {group[name]}
                      </svg>
                    </StripButton>
                  ))}
                </StripGroup>
              ))}
            </IconStrip>
            <Panels>
              <InfoPanel />
              <ColorPanel />
              <AppearancePanel />
              <TransparencyPanel />
              <LayersPanel />
            </Panels>
          </DockColumns>
        </RightDock>
      </Body>
    </Frame>
  </>
)

export default App
